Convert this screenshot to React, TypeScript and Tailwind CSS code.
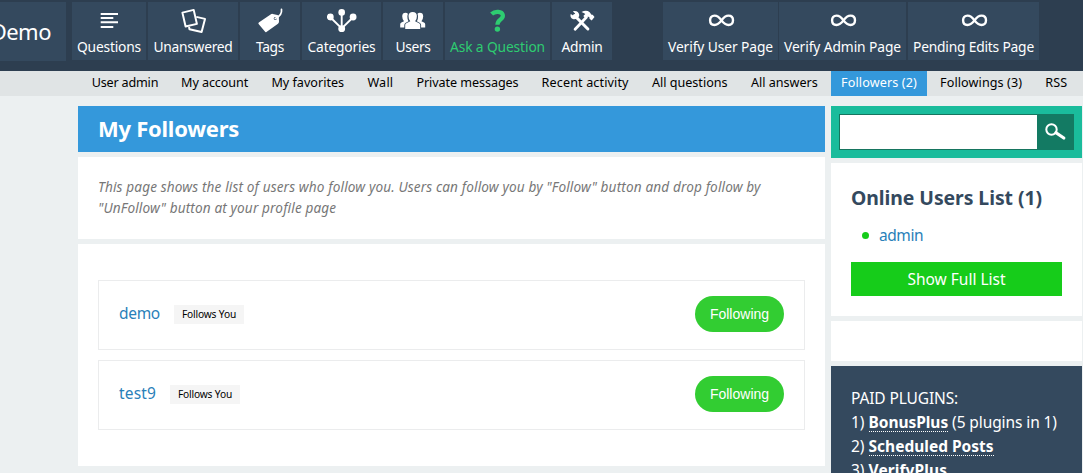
import type { ReactNode } from 'react'

function Icon({ children }: { children: ReactNode }) {
  return (
    <svg width="30" height="30" viewBox="0 0 30 30" fill="currentColor" className="shrink-0">
      {children}
    </svg>
  )
}

const ListIcon = () => (
  <Icon>
    <path d="M6.700 7H24v2H6.700zM6.700 11h12.600v2H6.700zM6.700 15.300H24v2H6.700zM6.700 20h12.600v2H6.700z" />
  </Icon>
)

const PagesIcon = () => (
  <Icon>
    <path
      d="M18.300 10.900L27 12.900L23.600 26L11.500 23.200L11 21"
      fill="none"
      stroke="currentColor"
      strokeWidth="2"
      strokeLinejoin="round"
    />
    <path d="M4.400 6.600L15.700 3.900L18.900 17.900L7.600 20.500Z" fill="none" stroke="currentColor" strokeWidth="2" strokeLinejoin="round" />
  </Icon>
)

const TagIcon = () => (
  <Icon>
    <path
      fillRule="evenodd"
      d="M3.800 16.600L15.600 8.400Q16.600 7.700 17.800 7.900L22.400 9Q23.600 9.300 23.800 10.500L24 15.600Q24 17 23 17.700L11.400 26Q10.500 26.500 9.900 25.600L3.600 18.100Q3 17.200 3.800 16.600ZM20.200 10.900A1.500 1.500 0 1 0 20.200 13.900A1.500 1.500 0 1 0 20.200 10.900Z"
    />
    <path d="M20.200 12.600C22.500 11.500 27.300 8.500 26.500 3.300" fill="none" stroke="currentColor" strokeWidth="1.700" strokeLinecap="round" />
  </Icon>
)

const NodesIcon = () => (
  <Icon>
    <path d="M2.800 10.800L14.700 22.500L26.400 11M14.700 6.500V22.500" fill="none" stroke="currentColor" strokeWidth="1.9" />
    <circle cx="3.3" cy="11" r="3.4" />
    <circle cx="14.7" cy="6.4" r="3.3" />
    <circle cx="26.100" cy="11" r="3.4" />
    <circle cx="14.7" cy="22.700" r="3.4" />
  </Icon>
)

const UsersIcon = () => (
  <Icon>
    <path d="M2.200 21.400V18.300Q2.200 17.200 3.400 16.600L6 15.300Q4.200 13 4.200 10.200Q4.300 6.800 7.600 6.800Q9 6.800 9.900 7.700Q9 10 9.500 12.400Q9.900 14.200 10.500 15.200L7.400 16.900Q6.300 17.600 6.300 19V21.400Z" />
    <path d="M27.200 21.400V18.300Q27.200 17.200 26 16.600L23.400 15.300Q25.200 13 25.200 10.200Q25.100 6.800 21.800 6.800Q20.400 6.800 19.500 7.700Q20.400 10 19.900 12.400Q19.500 14.200 18.900 15.200L22 16.900Q23.100 17.600 23.100 19V21.400Z" />
    <path d="M7.200 22.900V18.900Q7.200 17.900 8.300 17.300L12.300 15.200Q10.400 12.800 10.500 9.900Q10.700 6 14.700 6Q18.700 6 18.900 9.900Q19 12.800 17.100 15.200L21.100 17.300Q22.200 17.900 22.200 18.900V22.900Z" />
  </Icon>
)

const QuestionIcon = () => (
  <Icon>
    <path
      d="M8.600 8.100C10.500 6.300 13 5.700 15.200 5.900C20.700 6.400 20.900 10.800 18 13C15.700 14.800 14.400 15.600 14.400 18.800"
      fill="none"
      stroke="currentColor"
      strokeWidth="4.200"
    />
    <circle cx="14.400" cy="23.100" r="2.700" />
  </Icon>
)

const ToolsIcon = () => (
  <Icon>
    <path d="M7.500 9.500L20.900 23" fill="none" stroke="currentColor" strokeWidth="3" strokeLinecap="round" />
    <path d="M5.800 5.300L8.100 7.600L7 9.900L3.700 8.100Q2.700 11.700 5.800 13.100Q8.200 13.700 10.700 12.200L12.200 10.100Q12.500 6.700 9.500 5.300Q7.500 4.500 5.800 5.300Z" />
    <path d="M8.100 23.300L19.400 11.300" fill="none" stroke="currentColor" strokeWidth="2.800" strokeLinecap="round" />
    <path d="M14.500 5.900Q19.500 3.600 22.700 6.200L24.500 8.800L25.700 8.700L27.500 11.100L24.700 14.400L22.500 12.700L22.400 11.300L20.900 10.600L18.700 12.500L16.300 10.100L18.300 8.100Q17 6.700 14.500 5.900Z" />
  </Icon>
)

const InfinityIcon = () => (
  <Icon>
    <path
      d="M15.500 14.400C13.500 11.500 11.200 9.600 8.500 9.600C5.500 9.600 4.100 11.700 4.100 14.300C4.100 17 5.700 19 8.400 19C11.500 19 13.500 17.200 15.500 14.400C17.500 11.500 19.600 9.600 22.500 9.600C25.500 9.600 27 11.700 27 14.300C27 17 25.300 19 22.600 19C19.600 19 17.500 17.200 15.500 14.400Z"
      fill="none"
      stroke="currentColor"
      strokeWidth="2.400"
    />
  </Icon>
)

function Tile({ label, icon, className }: { label: string; icon: ReactNode; className: string }) {
  return (
    <a className={`flex h-[58px] shrink-0 flex-col items-center bg-[#34495e] pt-1 text-[13.8px] leading-[22px] whitespace-nowrap ${className}`}>
      {icon}
      <span>{label}</span>
    </a>
  )
}

const subnav = [
  { label: 'User admin', className: 'w-[86px] tracking-[-0.19px]' },
  { label: 'My account', className: 'w-[87px] tracking-[-0.1px]' },
  { label: 'My favorites', className: 'w-[93px]' },
  { label: 'Wall', className: 'w-[46px] tracking-[0.24px]' },
  { label: 'Private messages', className: 'w-[122px] tracking-[-0.08px]' },
  { label: 'Recent activity', className: 'w-[107px] tracking-[0.12px]' },
  { label: 'All questions', className: 'w-[96px]' },
  { label: 'All answers', className: 'w-[87px]' },
  { label: 'Followers (2)', className: 'w-[96px] tracking-[0.13px] bg-[#3498db] text-white' },
  { label: 'Followings (3)', className: 'w-[102px] tracking-[0.09px]' },
  { label: 'RSS', className: 'w-[42px] tracking-[0.1px]' },
]

function FollowerRow({ name, nameClass }: { name: string; nameClass: string }) {
  return (
    <div className="flex h-[70px] items-start border border-[#ebeced] pl-5">
      <a className={`mt-[20px] text-[15.5px] leading-6 text-[#2980b9] ${nameClass}`}>{name}</a>
      <span className="mt-[24px] h-[19px] w-[70px] bg-[#f5f5f5] text-center text-[10.2px] leading-[19px] tracking-[-0.17px] whitespace-nowrap text-black">
        Follows You
      </span>
      <button className="mt-[15px] mr-5 ml-auto h-9 w-[89px] rounded-[18px] bg-[#32cd32] font-['Liberation_Sans',Arial,sans-serif] text-[14px] text-white">
        Following
      </button>
    </div>
  )
}

export default function App() {
  return (
    <div className="h-[473px] w-[1083px] overflow-hidden bg-[#ecf0f1] font-['Noto_Sans',sans-serif]">
      <header className="flex h-[71px] items-start bg-[#2d3e50] pt-[2px] text-white">
        <a className="mr-[6px] flex h-[59px] w-[66px] shrink-0 justify-end bg-[#34495e] pr-[15px] text-[22px] leading-[59px] tracking-[-0.5px]">
          Demo
        </a>
        <nav className="flex gap-[2px]">
          <Tile label="Questions" icon={<ListIcon />} className="w-[74px] tracking-[-0.2px]" />
          <Tile label="Unanswered" icon={<PagesIcon />} className="w-[90px] tracking-[-0.28px]" />
          <Tile label="Tags" icon={<TagIcon />} className="w-[60px] tracking-[-0.3px]" />
          <Tile label="Categories" icon={<NodesIcon />} className="w-[79px] tracking-[-0.18px]" />
          <Tile label="Users" icon={<UsersIcon />} className="w-[60px] tracking-[-0.35px]" />
          <Tile label="Ask a Question" icon={<QuestionIcon />} className="w-[105px] tracking-[-0.13px] text-[#2ecc71]" />
          <Tile label="Admin" icon={<ToolsIcon />} className="w-[60px] tracking-[-0.26px]" />
        </nav>
        <nav className="ml-[51px] flex">
          <Tile label="Verify User Page" icon={<InfinityIcon />} className="mr-px w-[115px] tracking-[-0.1px]" />
          <Tile label="Verify Admin Page" icon={<InfinityIcon />} className="mr-[2px] w-[127px] tracking-[-0.1px]" />
          <Tile label="Pending Edits Page" icon={<InfinityIcon />} className="w-[131px] tracking-[-0.2px]" />
        </nav>
      </header>

      <nav className="flex h-[25px] gap-[3.125px] bg-[#e0e4e5] pl-[82px] text-[12.6px] leading-[24px] text-black">
        {subnav.map((item) => (
          <a key={item.label} className={`shrink-0 text-center whitespace-nowrap ${item.className}`}>
            {item.label}
          </a>
        ))}
      </nav>

      <div className="flex items-start gap-[6px] pt-[10px] pl-[78px]">
        <main className="flex w-[747px] shrink-0 flex-col gap-[5px]">
          <h1 className="h-[46px] bg-[#3498db] pl-5 text-[22px] leading-[45px] font-bold tracking-[-0.26px] text-white">
            My Followers
          </h1>
          <p className="h-[82px] bg-white pt-[19px] pl-5 text-[13.6px] leading-[21px] tracking-[0.135px] whitespace-nowrap text-[#777777] italic">
            This page shows the list of users who follow you. Users can follow you by "Follow" button and drop follow by
            <br />
            "UnFollow" button at your profile page
          </p>
          <section className="flex h-[222px] flex-col gap-[10px] bg-white px-5 pt-9">
            <FollowerRow name="demo" nameClass="w-[55px] tracking-[-0.3px]" />
            <FollowerRow name="test9" nameClass="w-[51px] tracking-[0.15px]" />
          </section>
        </main>

        <aside className="flex w-[251px] shrink-0 flex-col gap-[5px]">
          <form className="flex h-[52px] bg-[#1abc9c] p-2">
            <input className="h-9 w-[198px] border border-r-0 border-[#16755f] bg-white outline-none" />
            <button type="button" className="flex h-9 w-[37px] items-center justify-center bg-[#137a63] text-white">
              <svg width="22" height="18" viewBox="0 0 22 18" fill="none" stroke="currentColor">
                <circle cx="6.500" cy="6.500" r="5.200" strokeWidth="2" />
                <path d="M11 9.700L18.800 15" strokeWidth="3.200" strokeLinecap="round" />
              </svg>
            </button>
          </form>
          <section className="flex h-[153px] flex-col bg-white p-5">
            <h2 className="text-[19.4px] leading-[29px] font-bold tracking-[-0.06px] whitespace-nowrap text-[#34495e]">
              Online Users List (1)
            </h2>
            <div className="mt-[11px] flex h-6 items-center pl-[11px]">
              <span className="size-[7px] rounded-full bg-[#16cc1a]" />
              <a className="ml-[10px] text-[15.5px] leading-6 tracking-[-0.44px] text-[#2980b9]">admin</a>
            </div>
            <a className="mt-[15px] h-[34px] shrink-0 bg-[#16cc1a] text-center text-[15.5px] leading-[34px] text-white">
              Show Full List
            </a>
          </section>
          <section className="h-10 bg-white" />
          <section className="h-[140px] bg-[#34495e] p-5 text-[15.5px] leading-6 whitespace-nowrap text-white">
            <div className="tracking-[-0.13px]">PAID PLUGINS:</div>
            <div className="flex gap-1">
              <span>1)</span>
              <b className="h-[22px] border-b border-dotted border-white tracking-[-0.05px]">BonusPlus</b>
              <span className="tracking-[-0.1px]">(5 plugins in 1)</span>
            </div>
            <div className="flex gap-1">
              <span>2)</span>
              <b className="h-[22px] border-b border-dotted border-white">Scheduled Posts</b>
            </div>
            <div className="flex gap-1">
              <span>3)</span>
              <b className="h-[22px] border-b border-dotted border-white tracking-[0.1px]">VerifyPlus</b>
            </div>
          </section>
        </aside>
      </div>
    </div>
  )
}
